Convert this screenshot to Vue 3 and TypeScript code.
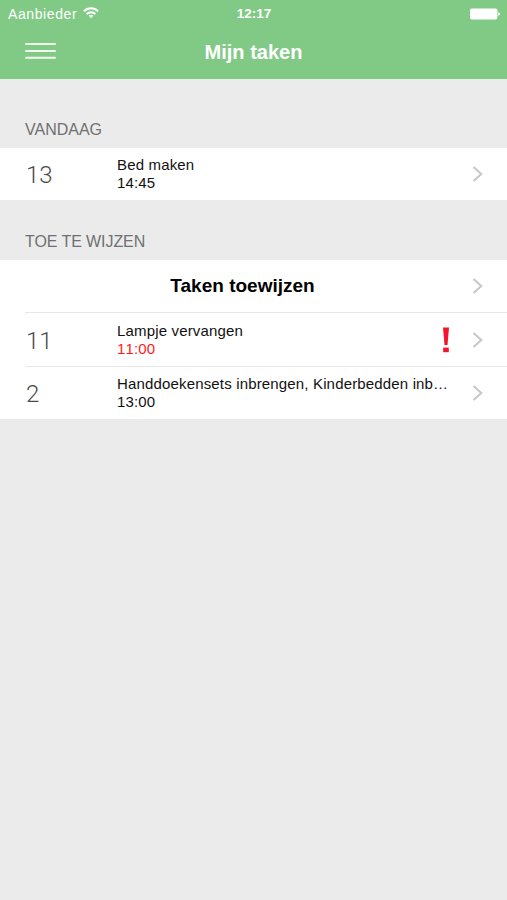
<script setup lang="ts">
interface Task {
  count: number
  title: string
  time: string
  late?: boolean
}

const today: Task[] = [{ count: 13, title: 'Bed maken', time: '14:45' }]

const unassigned: Task[] = [
  { count: 11, title: 'Lampje vervangen', time: '11:00', late: true },
  { count: 2, title: 'Handdoekensets inbrengen, Kinderbedden inb…', time: '13:00' },
]

const sections = [
  { name: 'VANDAAG', cls: 'today', action: '', tasks: today },
  { name: 'TOE TE WIJZEN', cls: 'assign', action: 'Taken toewijzen', tasks: unassigned },
]
</script>

<template>
  <div class="screen">
    <header class="top">
      <div class="status">
        <div class="carrier">
          <span class="carrier-name">Aanbieder</span>
          <svg class="wifi" width="16" height="12" viewBox="0 0 16 12" fill="none" stroke="#fff" stroke-width="2">
            <path d="M1 4.3C5 .3 11 .3 15 4.3" />
            <path d="M3.7 7C6.2 4.5 9.8 4.5 12.3 7" />
            <path d="M5.7 8.7Q8 6.9 10.3 8.7L8 11.2Z" fill="#fff" stroke="none" />
          </svg>
        </div>
        <span class="clock">12:17</span>
        <svg class="battery" width="30" height="12" viewBox="0 0 30 12" fill="#fff">
          <rect x="0" y="0.4" width="27.4" height="11.2" rx="1.8" />
          <path d="M28.2 4.2Q30 4.4 30 6T28.2 7.8Z" />
        </svg>
      </div>
      <nav class="nav">
        <button class="menu" aria-label="Menu">
          <svg width="31" height="18" viewBox="0 0 31 18" stroke="#f1fcef" stroke-width="1.9" stroke-linecap="round">
            <path d="M1 2H30M1 9H30M1 15.8H30" />
          </svg>
        </button>
        <h1 class="title">Mijn taken</h1>
      </nav>
    </header>

    <section v-for="s in sections" :key="s.name" :class="['section', s.cls]">
      <h2 class="heading"><span class="heading-text">{{ s.name }}</span></h2>
      <div class="list">
        <div v-if="s.action" class="row action-row">
          <span class="action">{{ s.action }}</span>
          <svg class="chevron" width="12" height="18" viewBox="0 0 12 18" fill="none" stroke="#c7c7c9" stroke-width="2">
            <path d="M1.5 2L9.3 9L1.5 16" />
          </svg>
        </div>
        <div v-for="t in s.tasks" :key="t.title" class="row">
          <span class="count">{{ t.count }}</span>
          <div class="info">
            <span class="name">{{ t.title }}</span>
            <span class="time" :class="{ late: t.late }">{{ t.time }}</span>
          </div>
          <svg v-if="t.late" class="alert" width="8" height="26" viewBox="0 0 8 26" fill="#f5142b">
            <path d="M1 .5H7L5.5 18H2.5Z" />
            <rect x="1.2" y="20.6" width="5.6" height="4.6" />
          </svg>
          <svg class="chevron" width="12" height="18" viewBox="0 0 12 18" fill="none" stroke="#c7c7c9" stroke-width="2">
            <path d="M1.5 2L9.3 9L1.5 16" />
          </svg>
        </div>
      </div>
    </section>
  </div>
</template>

<style>
body {
  margin: 0;
  background: #ebebeb;
}
</style>

<style scoped>
.screen {
  min-height: 900px;
  background: #ebebeb;
  color: #111;
  font-family: "Liberation Sans", Arial, sans-serif;
}

.top {
  height: 79px;
  background: #81ca86;
  color: #fff;
}

.status {
  display: grid;
  grid-template-columns: 1fr auto 1fr;
  align-items: center;
  height: 27px;
  padding: 0 7px 0 8px;
  font-size: 14px;
}

.carrier {
  display: flex;
  align-items: center;
  gap: 6px;
}

.carrier-name {
  letter-spacing: 0.6px;
}

.wifi {
  margin-top: -2px;
}

.clock {
  font-weight: bold;
  font-size: 13.5px;
}

.battery {
  justify-self: end;
}

.nav {
  display: grid;
  grid-template-columns: 1fr auto 1fr;
  align-items: center;
  height: 50px;
  padding: 0 25px;
}

.menu {
  justify-self: start;
  height: 18px;
  margin-top: -3px;
  padding: 0;
  border: 0;
  background: none;
}

.menu svg {
  display: block;
}

.title {
  margin: 0;
  font-size: 20px;
  line-height: 24px;
}

.heading {
  display: flex;
  align-items: flex-end;
  box-sizing: border-box;
  margin: 0;
  padding: 0 25px 8px;
  color: #707072;
  font-size: 16px;
  font-weight: normal;
  line-height: 20px;
}

.today .heading {
  height: 69px;
}

.assign .heading {
  height: 60px;
  letter-spacing: -0.08px;
}

.list {
  background: #fff;
}

.row {
  display: flex;
  align-items: center;
  box-sizing: border-box;
  height: 53px;
  margin-left: 25px;
  padding-right: 23px;
}

.today .row {
  height: 52px;
}

.row + .row {
  border-top: 1px solid #e8e8e9;
}

.action-row {
  height: 52px;
}

.action-row + .row {
  height: 54px;
}

.action {
  flex: 1;
  padding-right: 12px;
  color: #000;
  font-size: 19px;
  font-weight: bold;
  text-align: center;
}

.count {
  flex: 0 0 91px;
  padding: 2px 0 0 1px;
  box-sizing: border-box;
  margin-right: 1px;
  color: #4b4b4b;
  font-family: Roboto, sans-serif;
  font-size: 24px;
  font-weight: 300;
}

.info {
  display: flex;
  flex: 1;
  flex-direction: column;
  min-width: 0;
  font-size: 15px;
  font-kerning: none;
  letter-spacing: 0.16px;
  line-height: 18px;
  white-space: nowrap;
}

.late {
  color: #ff1a1c;
}

.alert {
  margin-right: 22px;
}

.chevron {
  flex: none;
}
</style>
